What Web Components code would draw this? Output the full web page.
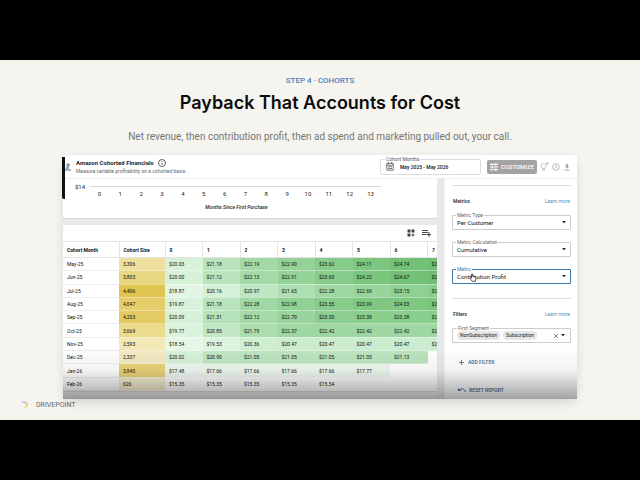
<!DOCTYPE html>
<html lang="en">
<head>
<meta charset="utf-8">
<title>Payback That Accounts for Cost</title>
<style>
  body {
    margin: 0;
    min-height: 100vh;
    display: flex;
    flex-direction: column;
    justify-content: center;
    background: #000;
    font-family: Roboto, "Liberation Sans", sans-serif;
    color: #222;
  }
</style>
</head>
<body>
<deck-slide>
  <span slot="step">STEP 4 · COHORTS</span>
  <span slot="title">Payback That Accounts for Cost</span>
  <span slot="lead">Net revenue, then contribution profit, then ad spend and marketing pulled out, your call.</span>
  <report-window>
    <report-header slot="header"></report-header>
    <month-axis slot="main"></month-axis>
    <cohort-table slot="main"></cohort-table>
    <filter-panel slot="side"></filter-panel>
  </report-window>
  <span slot="brand">DRIVEPOINT</span>
</deck-slide>

<script>
/**
 * Attach an open shadow root filled from a markup string
 * @param {HTMLElement} host - The element that gets the root
 * @param {string} markup - Styles and markup of the element
 */
function fillRoot(host, markup) {
  const template = document.createElement('template');
  template.innerHTML = markup;
  const root = host.attachShadow({ mode: 'open' });
  root.appendChild(template.content.cloneNode(true));
  return root;
}

/** One slide: step, title, lead text, content and brand */
class DeckSlide extends HTMLElement {
  constructor() {
    super();
    fillRoot(this, `
      <style>
        :host { display: block; background: #f5f4ef; padding: 15px 63px 9px; text-align: center; }
        .step { margin: 0; font-size: 8px; font-weight: 500; line-height: 12px; color: #4a7dbd; }
        h1 { margin: 4px 0 0; font: 600 18px/24px Inter, sans-serif; color: #0c0c0c; }
        .lead { margin: 15px 0 11px; font-size: 10px; line-height: 14px; color: #777; }
        .content { text-align: left; }
        footer { display: flex; align-items: center; gap: 6px; height: 12px; margin-left: -43px; font-size: 7px; color: #666; }
      </style>
      <p class="step"><slot name="step"></slot></p>
      <h1><slot name="title"></slot></h1>
      <p class="lead"><slot name="lead"></slot></p>
      <div class="content"><slot></slot></div>
      <footer>
        <svg width="10" height="10" viewBox="0 0 10 10" aria-hidden="true">
          <path d="M1 1.5h4l2 1.5H3z" fill="#b4bcc2"/>
          <path d="M5 3.5h3v2L6 8H4l2-2z" fill="#e6db85"/>
          <path d="M6 3h2v1H7z" fill="#c8cbc2"/>
        </svg>
        <slot name="brand"></slot>
      </footer>
    `);
  }
}

/** Frame of the report: header on top, main column and side panel below */
class ReportWindow extends HTMLElement {
  constructor() {
    super();
    fillRoot(this, `
      <style>
        :host { display: block; position: relative; background: #fff; box-shadow: 0 4px 12px -3px rgba(0,0,0,.2); }
        :host::before { content: ""; position: absolute; left: -1px; top: 2px; width: 3px; height: 42px; border-radius: 0 0 0 2px; background: #111; }
        :host::after { content: ""; position: absolute; inset: auto 0 0; height: 52px; pointer-events: none;
          background: linear-gradient(rgba(0,0,0,0), rgba(0,0,0,.05) 45%, rgba(0,0,0,.36)); }
        .body { display: grid; grid-template-columns: minmax(0, 1fr) 133px; }
        .main { display: flex; flex-direction: column; gap: 6px; padding-right: 7px; background: #e9e9e9; }
      </style>
      <slot name="header"></slot>
      <div class="body">
        <div class="main"><slot name="main"></slot></div>
        <slot name="side"></slot>
      </div>
    `);
  }
}

class ReportHeader extends HTMLElement {
  constructor() {
    super();
    fillRoot(this, `
      <style>
        :host { display: flex; align-items: center; box-sizing: border-box; height: 24px; padding: 0 6px 0 2px; border-bottom: 1px solid #eee; }
        .names { flex: 1; padding-left: 5px; }
        h2 { display: flex; align-items: center; gap: 4px; margin: 0; font-size: 6px; line-height: 9px; font-weight: 700; }
        p { margin: 0; font-size: 5px; line-height: 8px; color: #666; }
        .date { width: 101px; }
        .custom { display: flex; align-items: center; justify-content: center; gap: 3px; width: 50px; height: 14px; margin: 0 0 0 6px;
          padding: 0; border: 0; border-radius: 2px; background: #a3a3a3; color: #fff; font: 500 6px/14px Roboto, sans-serif; }
        .icon { display: flex; padding: 0; margin-left: 3px; border: 0; background: none; color: #aaa; }
        svg { fill: none; stroke: currentColor; }
      </style>
      <svg width="6" height="8" viewBox="0 0 6 8" color="#52708f" aria-hidden="true"><circle cx="3" cy="2" r="1.2"/><path d="M3 3v3M0 7h6M1 6l1-2"/></svg>
      <div class="names">
        <h2>Amazon Cohorted Financials
          <svg width="8" height="8" viewBox="0 0 8 8" stroke-width=".7" aria-hidden="true"><circle cx="4" cy="4" r="3.5"/><path d="M4 3.5v2.3M4 2v.8"/></svg>
        </h2>
        <p>Measure variable profitability on a cohorted basis.</p>
      </div>
      <date-field class="date"></date-field>
      <button class="custom">
        <svg width="8" height="8" viewBox="0 0 7 7" stroke-width=".9" aria-hidden="true"><path d="M0 1.2h3.5M5 1.2h2M4.6 0v2.4M0 3.5h1.6M3 3.5h4M2.2 2.3v2.4M0 5.8h3M4.5 5.8H7M4.3 4.6V7"/></svg>
        CUSTOMIZE
      </button>
      <button class="icon" aria-label="Insights"><svg width="9" height="9" viewBox="0 0 9 9" stroke-width=".8"><path d="M2.6 6C0 4.5 1 1.5 3.6 1.5S7 4.5 4.8 6v1H2.6zM2.8 8.2h2M7.3.3v2.4M6.1 1.5h2.4"/></svg></button>
      <button class="icon" aria-label="History"><svg width="8" height="8" viewBox="0 0 8 8" stroke-width=".8"><circle cx="4" cy="4" r="3.3"/><path d="M4 2v2.2l1.5 1"/></svg></button>
      <button class="icon" aria-label="Download"><svg width="8" height="8" viewBox="0 0 8 8"><path d="M3 1h2v2.2h1.5L4 5.6 1.5 3.2H3z" fill="currentColor" stroke="none"/><path d="M1.5 7h5"/></svg></button>
    `);
  }
}

/** Date range box with a label in its border */
class DateField extends HTMLElement {
  constructor() {
    super();
    fillRoot(this, `
      <style>
        :host { display: block; position: relative; }
        .box { display: flex; align-items: center; gap: 6px; box-sizing: border-box; height: 16px; padding: 0 5px; border: 1px solid #ddd; border-radius: 2px; }
        label { position: absolute; left: 5px; top: -3px; padding: 0 1px; background: #fff; font-size: 5px; line-height: 6px; color: #555; }
        input { flex: 1; min-width: 0; padding: 0; border: 0; outline: 0; background: none; font: 500 5px/12px Roboto, sans-serif; color: #111; }
        svg { flex: none; }
      </style>
      <div class="box">
        <svg width="8" height="9" viewBox="0 0 8 9" fill="none" stroke="#555" stroke-width=".8" aria-hidden="true"><path d="M.8 1.4h6.4v6.8H.8zM.8 3.2h6.4M2.3 0v1.5M5.7 0v1.5M2 4.8h4M2 6.5h4"/></svg>
        <input id="range" value="May 2025 - May 2026">
      </div>
      <label for="range">Cohort Months</label>
    `);
  }
}

/** Bottom part of the chart: the $14 line and the month numbers */
class MonthAxis extends HTMLElement {
  constructor() {
    super();
    const months = Array.from({ length: 14 }, (_, i) => `<span>${i}</span>`).join('');
    fillRoot(this, `
      <style>
        :host { display: block; box-sizing: border-box; height: 40px; padding: 4px 56px 0 12px; background: #fff; font-size: 6px; line-height: 7px; border-bottom: 1px solid #d4d4d4; }
        .line { display: flex; align-items: center; gap: 5px; }
        hr { flex: 1; margin: 0; border: 0; border-top: 1px solid #d8d8d8; }
        .months { display: grid; grid-template-columns: repeat(14, 1fr); margin-left: 14px; text-align: center; }
        p { margin: 7px 0 0 17px; font-size: 5px; font-weight: 500; text-align: center; font-style: italic; }
      </style>
      <div class="line">$14<hr></div>
      <div class="months">${months}</div>
      <p>Months Since First Purchase</p>
    `);
  }
}

const cohorts = [
  ['May-25', '3,306', '#efe0a0', [20.03, 21.18, 22.19, 22.90, 23.62, 24.11, 24.74, 24.9]],
  ['Jun-25', '3,803', '#e8d780', [20.00, 21.12, 22.13, 22.91, 23.60, 24.22, 24.67, 24.9]],
  ['Jul-25', '4,406', '#dfc44f', [18.87, 20.16, 20.97, 21.65, 22.28, 22.69, 23.15, 23.5]],
  ['Aug-25', '4,047', '#e5cd6b', [19.87, 21.18, 22.28, 22.98, 23.55, 23.99, 24.03, 24.2]],
  ['Sep-25', '4,203', '#e3ca62', [20.09, 21.31, 22.12, 22.70, 23.30, 23.38, 23.38, 23.4]],
  ['Oct-25', '3,669', '#ebdb8c', [19.77, 20.85, 21.79, 22.37, 22.42, 22.42, 22.42, 22.4]],
  ['Nov-25', '2,593', '#f2e8b8', [18.54, 19.53, 20.36, 20.47, 20.47, 20.47, 20.47, 20.5]],
  ['Dec-25', '2,337', '#f4ebc4', [20.02, 20.90, 21.05, 21.05, 21.05, 21.05, 21.13]],
  ['Jan-26', '3,840', '#e8d378', [17.48, 17.66, 17.66, 17.66, 17.66, 17.77]],
  ['Feb-26', '626', '#f6efcf', [15.35, 15.35, 15.35, 15.35, 15.54]],
];

const greens = [
  [16, [255, 255, 255]], [18.5, [230, 246, 231]], [20, [216, 242, 218]], [21.2, [184, 227, 188]],
  [22.2, [162, 217, 166]], [23, [146, 209, 150]], [24, [126, 200, 130]], [25, [110, 190, 114]],
];

/**
 * Heat colour of a value, mixed between the two nearest stops
 * @param {number} value - Dollars per customer
 */
function heat(value) {
  if (value <= greens[0][0]) return '#fff';
  const i = greens.findIndex(([stop]) => stop >= value);
  const [from, a] = greens[i - 1];
  const [to, b] = greens[i];
  const t = (value - from) / (to - from);
  return `rgb(${a.map((c, n) => Math.round(c + (b[n] - c) * t)).join(',')})`;
}

class CohortTable extends HTMLElement {
  constructor() {
    super();
    const head = Array.from({ length: 8 }, (_, i) => `<th>${i}</th>`).join('');
    const rows = cohorts.map(([month, size, gold, values]) => {
      const cells = Array.from({ length: 8 }, (_, i) => {
        if (values[i] === undefined) return '<td></td>';
        // the last column is cut by the edge of the card
        const text = i === 7 ? '$2' : '$' + values[i].toFixed(2);
        return `<td style="background:${heat(values[i])}">${text}</td>`;
      }).join('');
      return `<tr><td class="month">${month}</td><td style="background:${gold}">${size}</td>${cells}</tr>`;
    }).join('');
    fillRoot(this, `
      <style>
        :host { display: block; overflow: hidden; background: #fff; border-radius: 1px; }
        .tools { display: flex; justify-content: flex-end; align-items: center; gap: 7px; height: 16px; padding-right: 6px; }
        button { display: flex; padding: 0; border: 0; background: none; color: #444; }
        table { width: 402px; height: 150px; table-layout: fixed; border-collapse: collapse; font-size: 5px; line-height: 6px; color: #111; }
        .c-month { width: 56px; }
        .c-size { width: 46px; }
        th, td { padding: 0 0 0 4px; text-align: left; white-space: nowrap; border-bottom: 1px solid rgba(255,255,255,.4); }
        th { height: 15px; border: solid #e4e4e4; border-width: 1px 0 1px 1px; }
        th:first-child { border-left: 0; }
        .month { border-bottom-color: #eee; }
        .foot { height: 7px; background: #eee; border-top: 1px solid #ddd; }
      </style>
      <div class="tools">
        <button aria-label="Layout"><svg width="8" height="8" viewBox="0 0 8 8" fill="currentColor"><path d="M.5.5h3v3h-3zM4.5.5h3v3h-3zM.5 4.5h3v3h-3zM5.5 4.5h1v1h1v1h-1v1h-1v-1h-1v-1h1z"/></svg></button>
        <button aria-label="Add row"><svg width="9" height="8" viewBox="0 0 9 8" fill="none" stroke="currentColor"><path d="M0 1.5h6M0 3.5h6M0 5.5h4M7 3v5M4.5 5.5H9"/></svg></button>
      </div>
      <table>
        <colgroup><col class="c-month"><col class="c-size"><col span="8"></colgroup>
        <thead><tr><th>Cohort Month</th><th>Cohort Size</th>${head}</tr></thead>
        <tbody>${rows}</tbody>
      </table>
      <div class="foot"></div>
    `);
  }
}

/** Outlined drop-down, attributes: label, value, active */
class SelectField extends HTMLElement {
  constructor() {
    super();
    fillRoot(this, `
      <style>
        :host { display: block; position: relative; --line: #ccc; --label: #666; }
        :host([active]) { --line: #3d78a8; --label: #3d78a8; }
        label { position: absolute; left: 4px; top: -3px; padding: 0 1px; background: #fff; font-size: 5px; line-height: 6px; color: var(--label); }
        select { display: block; appearance: none; box-sizing: border-box; width: 100%; height: 15px; padding: 0 4px; border: 1px solid var(--line);
          border-radius: 1px; outline: 0; background: #fff; font: 6px/13px Roboto, sans-serif; color: #111; }
        svg { position: absolute; right: 5px; top: 6px; }
      </style>
      <select id="field"><option></option></select>
      <label for="field"></label>
      <svg width="4" height="3" viewBox="0 0 4 3" aria-hidden="true"><path d="M0 0h4L2 2.5z" fill="#333"/></svg>
    `);
  }
  connectedCallback() {
    this.shadowRoot.querySelector('option').textContent = this.getAttribute('value');
    this.shadowRoot.querySelector('label').textContent = this.getAttribute('label');
  }
}

/** Outlined box with the chosen segments as chips */
class SegmentField extends HTMLElement {
  constructor() {
    super();
    fillRoot(this, `
      <style>
        :host { display: flex; align-items: center; gap: 3px; position: relative; box-sizing: border-box; height: 15px; padding: 0 5px 0 4px; border: 1px solid #ccc; border-radius: 1px; }
        .label { position: absolute; left: 4px; top: -4px; padding: 0 1px; background: #fff; font-size: 5px; line-height: 6px; color: #666; }
        ::slotted(span) { padding: 0 3px; border-radius: 4px; background: #e6e6e6; font-size: 5px; line-height: 9px; }
        button { display: flex; padding: 0; border: 0; background: none; }
        .clear { margin-left: auto; }
      </style>
      <span class="label">First Segment</span>
      <slot></slot>
      <button class="clear" aria-label="Clear"><svg width="4" height="4" viewBox="0 0 4 4" stroke="#555" stroke-width=".7"><path d="M0 0l4 4M4 0L0 4"/></svg></button>
      <button aria-label="Open"><svg width="4" height="3" viewBox="0 0 4 3"><path d="M0 0h4L2 2.5z" fill="#333"/></svg></button>
    `);
  }
}

class FilterPanel extends HTMLElement {
  constructor() {
    super();
    fillRoot(this, `
      <style>
        :host { display: block; padding: 6px 6px 0 7px; background: #fff; border-left: 1px solid #f3f3f3; }
        section { border-top: 1px solid #ddd; }
        header { display: flex; justify-content: space-between; align-items: center; padding: 11px 1px 10px; line-height: 8px; }
        h3 { margin: 0; font-size: 5px; font-weight: 700; color: #444; }
        a { font-size: 5px; color: #4f94bd; text-decoration: none; }
        .fields { display: grid; gap: 12px; padding-bottom: 14px; }
        .pointer { position: absolute; left: 406px; top: 118px; }
        .action { display: flex; align-items: center; gap: 3px; height: 8px; padding: 0 0 0 6px; border: 0; background: none; font: 500 5px/8px Roboto, sans-serif; color: #3f6692; }
        .add { margin: 1px 0 20px; }
      </style>
      <section>
        <header><h3>Metrics</h3><a href="#metrics">Learn more</a></header>
        <div class="fields">
          <select-field label="Metric Type" value="Per Customer"></select-field>
          <select-field label="Metric Calculation" value="Cumulative"></select-field>
          <select-field label="Metric" value="Contribution Profit" active></select-field>
        </div>
      </section>
      <section>
        <header><h3>Filters</h3><a href="#filters">Learn more</a></header>
        <div class="fields">
          <segment-field><span>NonSubscription</span><span>Subscription</span></segment-field>
        </div>
        <button class="action add"><svg width="7" height="7" viewBox="0 0 7 7" stroke="currentColor" stroke-width=".8"><path d="M3.5 1v5M1 3.5h5"/></svg>ADD FILTER</button>
        <button class="action"><svg width="8" height="6" viewBox="0 0 8 6" fill="none" stroke="currentColor"><path d="M0 1v3h3z" fill="currentColor" stroke="none"/><path d="M1.5 3C3.5 1 6.5 1.5 7.5 5"/></svg>RESET REPORT</button>
      </section>
      <svg class="pointer" width="8" height="9" viewBox="0 0 8 9" fill="#fff" stroke="#222" stroke-width=".8" aria-hidden="true"><path d="M2.5 5V1.2q.7-.8 1.2 0V3.5l2.5.5q1 .3.8 1.5L6.3 8.3H3.3L1 5.5q0-1 1.5-.5z"/></svg>
    `);
  }
}

customElements.define('deck-slide', DeckSlide);
customElements.define('report-window', ReportWindow);
customElements.define('date-field', DateField);
customElements.define('report-header', ReportHeader);
customElements.define('month-axis', MonthAxis);
customElements.define('cohort-table', CohortTable);
customElements.define('select-field', SelectField);
customElements.define('segment-field', SegmentField);
customElements.define('filter-panel', FilterPanel);
</script>
</body>
</html>
